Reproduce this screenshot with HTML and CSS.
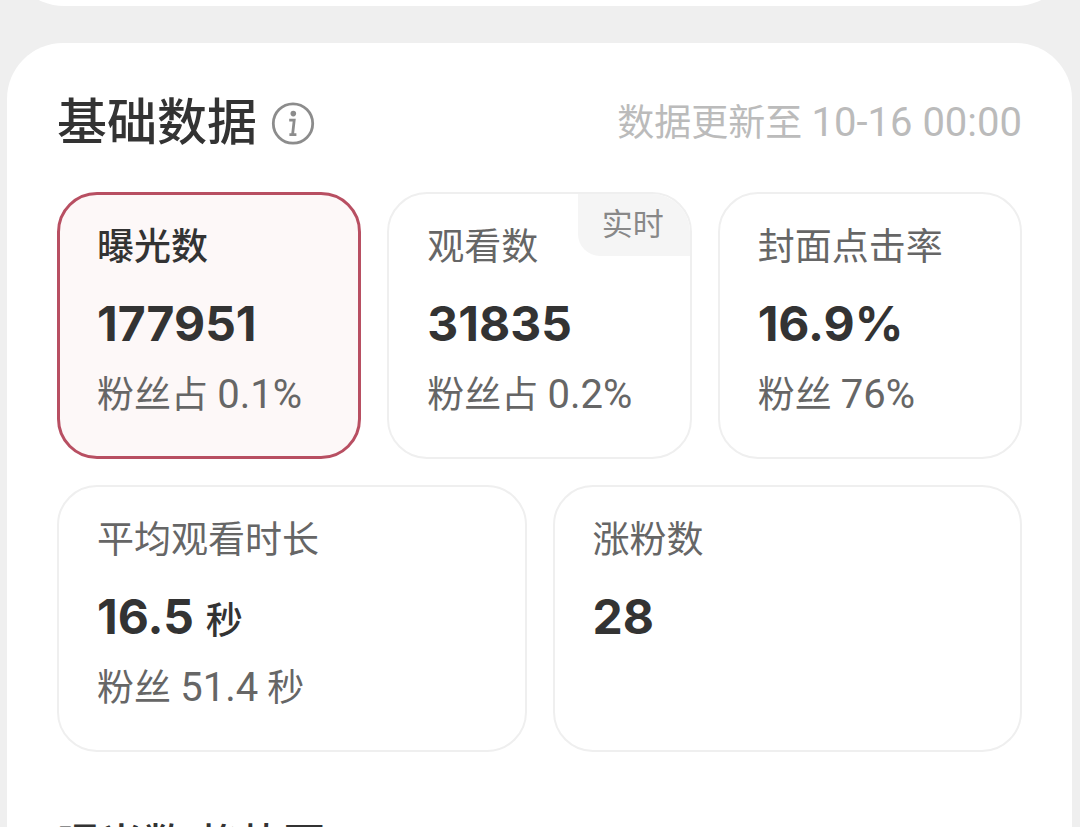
FILE: index.html
```
<!DOCTYPE html>
<html lang="zh-CN">

<head>
    <meta charset="UTF-8">
    <meta name="viewport" content="width=device-width, initial-scale=1.0">
    <title>基础数据</title>
    <link rel="stylesheet" href="styles.css">
</head>

<body>
    <!-- 上一个模块的底部 -->
    <div class="prev-panel"></div>

    <!-- 基础数据 -->
    <main class="panel">
        <header class="head">
            <h1 class="title">基础数据</h1>
            <button class="info" type="button" aria-label="数据说明">
                <svg width="44" height="44" viewBox="0 0 44 44" fill="none" stroke="#8c8c8c">
                    <circle cx="22" cy="22.5" r="19.7" stroke-width="2.8" />
                    <circle cx="22.3" cy="12.6" r="2.8" fill="#8c8c8c" stroke="none" />
                    <path d="M18.2 19.2h5l-1.6 14.2M18.4 33.6h7" stroke-width="2.8" />
                </svg>
            </button>
            <p class="update">数据更新至 <span class="num">10-16 00:00</span></p>
        </header>

        <!-- 第一行三个 -->
        <div class="row">
            <button class="card on" type="button">
                <span class="label">曝光数</span>
                <span class="value">177951</span>
                <span class="fans">粉丝占 <span class="num">0.1%</span></span>
            </button>
            <button class="card" type="button">
                <span class="tag">实时</span>
                <span class="label">观看数</span>
                <span class="value">31835</span>
                <span class="fans">粉丝占 <span class="num">0.2%</span></span>
            </button>
            <button class="card" type="button">
                <span class="label">封面点击率</span>
                <span class="value">16.9%</span>
                <span class="fans">粉丝 <span class="num">76%</span></span>
            </button>
        </div>

        <!-- 第二行两个 -->
        <div class="row">
            <button class="card" type="button">
                <span class="label">平均观看时长</span>
                <span class="value">16.5<span class="unit">秒</span></span>
                <span class="fans">粉丝 <span class="num">51.4</span> 秒</span>
            </button>
            <button class="card" type="button">
                <span class="label">涨粉数</span>
                <span class="value">28</span>
            </button>
        </div>

        <!-- 趋势图 -->
        <h2 class="subtitle">曝光数 趋势图</h2>
    </main>
</body>

</html>
```
FILE: styles.css
```
* {
    margin: 0;
    padding: 0;
    box-sizing: border-box;
}

html {
    height: 100%;
    overflow: hidden;
}

body {
    height: 100%;
    overflow: hidden;
    background-color: #efefef;
    font-family: Roboto, "Noto Sans CJK SC", sans-serif;
    color: #333;
}

button {
    border: none;
    background: none;
    font-family: inherit;
    color: inherit;
    cursor: pointer;
}

.prev-panel {
    height: 56px;
    margin: -50px 8px 37px;
    border-radius: 0 0 56px 56px;
    background-color: #fff;
}

.panel {
    margin: 0 8px 0 7px;
    padding: 40px 50px;
    border-radius: 56px 56px 0 0;
    background-color: #fff;
}

.head {
    display: flex;
    align-items: center;
    height: 80px;
    margin-bottom: 29px;
}

.title {
    font-size: 50px;
    font-weight: 500;
    line-height: 80px;
}

.info {
    width: 44px;
    height: 44px;
    margin-left: 14px;
}

.info svg {
    display: block;
}

.update {
    margin-left: auto;
    font-size: 37px;
    line-height: 80px;
    color: #bbb;
}

.num {
    font-size: 40px;
}

.row {
    display: flex;
    gap: 26px;
    margin-bottom: 26px;
}

/* 数据卡片 */
.card {
    position: relative;
    flex: 1 1 0;
    display: flex;
    flex-direction: column;
    height: 267px;
    padding: 28px 38px 24px;
    border: 2px solid #efefef;
    border-radius: 40px;
    overflow: hidden;
    background-color: #fff;
    text-align: left;
    white-space: nowrap;
}

.label {
    font-size: 37px;
    line-height: 52px;
    color: #666;
}

.value {
    height: 68px;
    margin: 16px 0 11px;
    font-family: Inter, "Noto Sans CJK SC", sans-serif;
    font-size: 48px;
    font-weight: 700;
    line-height: 68px;
}

.unit {
    margin-left: 12px;
    font-size: 37px;
    font-weight: 500;
}

.fans {
    font-size: 37px;
    line-height: 52px;
    color: #666;
}

/* 选中 */
.card.on {
    border: 3px solid #b84f62;
    padding: 27px 37px 23px;
    background-color: #fdf8f8;
}

.card.on .label {
    color: #333;
    font-weight: 500;
}

/* 右上角标签 */
.tag {
    position: absolute;
    top: 0;
    right: 0;
    padding: 0 26px 0 24px;
    border-bottom-left-radius: 22px;
    background-color: #f5f5f5;
    font-size: 31px;
    line-height: 62px;
    color: #888;
}

.subtitle {
    margin-top: 61px;
    font-size: 43px;
    font-weight: 500;
    line-height: 64px;
}
```
